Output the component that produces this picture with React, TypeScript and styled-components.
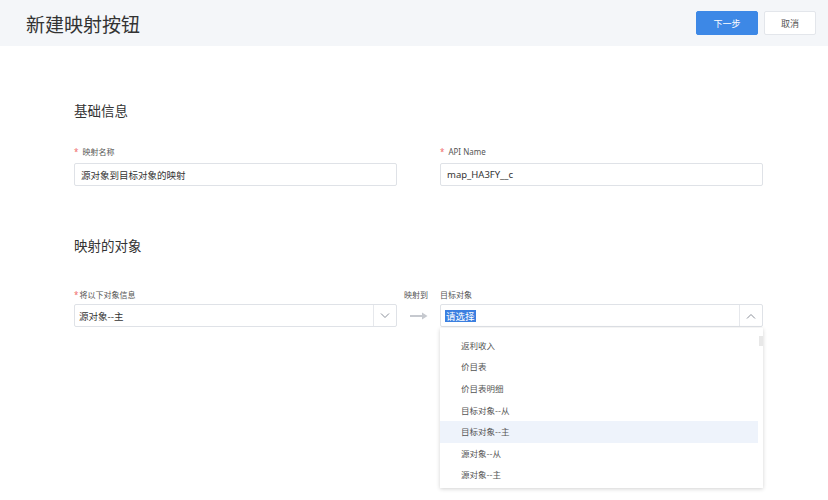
import { createGlobalStyle } from "styled-components";
import styled from "styled-components";

const GlobalStyle = createGlobalStyle`
  html, body {
    margin: 0;
    padding: 0;
    background: #ffffff;
  }
  body {
    font-family: "Noto Sans", "Noto Sans CJK SC", sans-serif;
    color: #333333;
  }
`;

const Page = styled.div`
  width: 828px;
  height: 500px;
  overflow: hidden;
  background: #ffffff;
`;

const Header = styled.header`
  height: 46px;
  background: #f4f6f9;
  display: flex;
  align-items: center;
  justify-content: space-between;
  padding: 0 12px 0 26px;
`;

const Title = styled.h1`
  margin: 0;
  font-size: 19px;
  font-weight: 400;
  color: #333;
  font-family: "Noto Sans CJK SC", sans-serif;
`;

const Actions = styled.div`
  display: flex;
  gap: 6px;
`;

const Button = styled.button<{ $primary?: boolean }>`
  height: 24px;
  padding: 0;
  width: ${(p) => (p.$primary ? "62px" : "52px")};
  border-radius: 2px;
  border: 1px solid ${(p) => (p.$primary ? "#3d88e6" : "#e3e6eb")};
  background: ${(p) => (p.$primary ? "#3d88e6" : "#ffffff")};
  color: ${(p) => (p.$primary ? "#ffffff" : "#555")};
  font-size: 9px;
  font-family: "Noto Sans CJK SC", sans-serif;
`;

const Body = styled.main`
  padding: 54px 0 0 74px;
`;

const SectionTitle = styled.h2<{ $gapTop?: number }>`
  margin: ${(p) => p.$gapTop ?? 0}px 0 0;
  height: 20px;
  line-height: 20px;
  font-size: 13.5px;
  font-weight: 400;
  color: #333;
  font-family: "Noto Sans CJK SC", sans-serif;
`;

const Grid = styled.div<{ $gapTop: number }>`
  display: grid;
  grid-template-columns: 323px 43px 323px;
  margin-top: ${(p) => p.$gapTop}px;
`;

const Field = styled.div<{ $col: number }>`
  grid-column: ${(p) => p.$col};
  display: flex;
  flex-direction: column;
  position: relative;
`;

const Label = styled.div<{ $tight?: boolean }>`
  height: 12px;
  line-height: 12px;
  font-size: 8px;
  color: #555;
  margin-bottom: ${(p) => (p.$tight ? "3px" : "5px")};
  white-space: nowrap;
  font-family: "Noto Sans", "Noto Sans CJK SC", sans-serif;
`;

const Star = styled.span<{ $gap?: boolean }>`
  color: #f06a6a;
  margin-right: ${(p) => (p.$gap ? "4px" : "1px")};
`;

const Input = styled.div`
  box-sizing: border-box;
  height: 23px;
  border: 1px solid #dfe2e7;
  border-radius: 2px;
  display: flex;
  align-items: center;
  padding: 0 6px;
  font-size: 9.5px;
  color: #333;
  font-family: "Noto Sans", "Noto Sans CJK SC", sans-serif;
`;

const Select = styled.div`
  box-sizing: border-box;
  height: 23px;
  border: 1px solid #dfe2e7;
  border-radius: 2px;
  display: flex;
  align-items: stretch;
  font-size: 9.5px;
  color: #333;
  font-family: "Noto Sans CJK SC", sans-serif;
`;

const SelectValue = styled.div`
  flex: 1;
  display: flex;
  align-items: center;
  padding: 0 4px;
`;

const Selected = styled.span`
  background: #3b7fe0;
  color: #ffffff;
  line-height: 12px;
  padding: 0 1px;
`;

const Caret = styled.div`
  width: 22px;
  border-left: 1px solid #e6e8ec;
  display: flex;
  align-items: center;
  justify-content: center;
`;

const Connector = styled.div`
  grid-column: 2;
  display: flex;
  flex-direction: column;
  padding-left: 7px;
`;

const ArrowBox = styled.div`
  height: 23px;
  display: flex;
  align-items: center;
  padding-left: 6px;
`;

const Dropdown = styled.div`
  position: absolute;
  top: 39px;
  left: 0;
  width: 323px;
  height: 160px;
  background: #ffffff;
  box-shadow: 0 1px 4px rgba(0, 0, 0, 0.18);
  overflow: hidden;
  display: flex;
  flex-direction: column;
  justify-content: flex-end;
  padding-bottom: 2px;
  box-sizing: border-box;
`;

const Option = styled.div<{ $active?: boolean }>`
  flex: none;
  height: 21.6px;
  line-height: 21.6px;
  padding-left: 21px;
  margin-right: 5px;
  font-size: 8.5px;
  color: #555;
  background: ${(p) => (p.$active ? "#eef3fb" : "transparent")};
  font-family: "Noto Sans CJK SC", sans-serif;
`;

const Thumb = styled.div`
  position: absolute;
  right: 0;
  top: 8px;
  width: 4px;
  height: 10px;
  background: #e8e8e8;
`;

const Chevron = ({ up }: { up?: boolean }) => (
  <svg width="10" height="6" viewBox="0 0 10 6" fill="none">
    <path
      d={up ? "M1 5.5 L5 1.5 L9 5.5" : "M1 0.5 L5 4.5 L9 0.5"}
      stroke="#8a8f99"
      strokeWidth="1"
    />
  </svg>
);

const options = [
  "返利明细",
  "返利收入",
  "价目表",
  "价目表明细",
  "目标对象--从",
  "目标对象--主",
  "源对象--从",
  "源对象--主",
];

export default function App() {
  return (
    <Page>
      <GlobalStyle />
      <Header>
        <Title>新建映射按钮</Title>
        <Actions>
          <Button $primary>下一步</Button>
          <Button>取消</Button>
        </Actions>
      </Header>
      <Body>
        <SectionTitle>基础信息</SectionTitle>
        <Grid $gapTop={26}>
          <Field $col={1}>
            <Label>
              <Star $gap>*</Star>映射名称
            </Label>
            <Input>源对象到目标对象的映射</Input>
          </Field>
          <Field $col={3}>
            <Label>
              <Star $gap>*</Star>API Name
            </Label>
            <Input>map_HA3FY__c</Input>
          </Field>
        </Grid>

        <SectionTitle $gapTop={49}>映射的对象</SectionTitle>
        <Grid $gapTop={34}>
          <Field $col={1}>
            <Label $tight>
              <Star>*</Star>将以下对象信息
            </Label>
            <Select>
              <SelectValue>源对象--主</SelectValue>
              <Caret>
                <Chevron />
              </Caret>
            </Select>
          </Field>
          <Connector>
            <Label $tight>映射到</Label>
            <ArrowBox>
              <svg width="18" height="8" viewBox="0 0 18 8">
                <path d="M0 4 H13" stroke="#c6c9cf" strokeWidth="2" />
                <path d="M12 0.5 L17.5 4 L12 7.5 Z" fill="#c6c9cf" />
              </svg>
            </ArrowBox>
          </Connector>
          <Field $col={3}>
            <Label $tight>目标对象</Label>
            <Select>
              <SelectValue>
                <Selected>请选择</Selected>
              </SelectValue>
              <Caret>
                <Chevron up />
              </Caret>
            </Select>
            <Dropdown>
              {options.map((o) => (
                <Option key={o} $active={o === "目标对象--主"}>
                  {o}
                </Option>
              ))}
              <Thumb />
            </Dropdown>
          </Field>
        </Grid>
      </Body>
    </Page>
  );
}
